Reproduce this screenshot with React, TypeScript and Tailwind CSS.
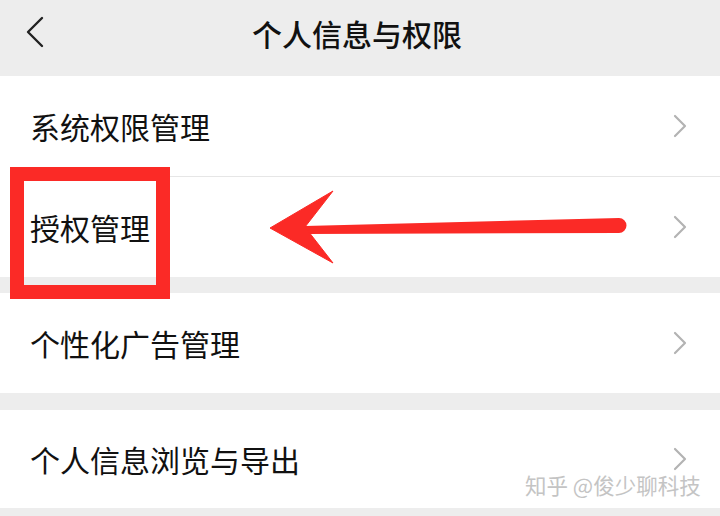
import React from "react";

const font = { fontFamily: '"Noto Sans CJK SC", "Noto Sans", sans-serif' };

function Chevron() {
  return (
    <svg width="16" height="24" viewBox="0 0 16 24" className="shrink-0">
      <path d="M3 2 L13 12 L3 22" fill="none" stroke="#b3b3b3" strokeWidth="2.2" strokeLinecap="round" strokeLinejoin="round" />
    </svg>
  );
}

function Row({ label, h = "h-[100px]" }: { label: string; h?: string }) {
  return (
    <div className={`flex items-center justify-between bg-white pl-[30px] pr-[32px] ${h}`}>
      <span className="text-[30px] leading-none text-[#111]">{label}</span>
      <Chevron />
    </div>
  );
}

export default function App() {
  return (
    <div className="relative w-[720px] h-[516px] overflow-hidden bg-[#ededed]" style={font}>
      {/* header */}
      <div className="relative flex h-[76px] items-start justify-center pt-[15px] pr-[6px]">
        <svg width="20" height="32" viewBox="0 0 20 32" className="absolute left-[25px] top-[16px]">
          <path d="M17 2 L3 16 L17 30" fill="none" stroke="#222" strokeWidth="2.4" strokeLinecap="round" strokeLinejoin="round" />
        </svg>
        <span className="text-[30px] font-medium leading-[36px] text-[#111]">个人信息与权限</span>
      </div>

      <div className="flex flex-col">
        <Row label="系统权限管理" />
        <div className="bg-white pl-[30px]">
          <div className="h-px bg-[#e6e6e6]" />
        </div>
        <Row label="授权管理" />
        <div className="h-[16px]" />
        <Row label="个性化广告管理" />
        <div className="h-[17px]" />
        <Row label="个人信息浏览与导出" h="h-[98px]" />
      </div>

      {/* annotations */}
      <div className="absolute left-[10px] top-[167px] h-[132px] w-[160px] border-[14px] border-[#fb2a26]" />
      <svg width="720" height="516" className="absolute left-0 top-0 pointer-events-none">
        <path d="M305 226 L619 218 A7.5 7.5 0 0 1 619 233 L305 234 Z" fill="#fb2a26" />
        <path d="M270 228 L333 191 L305 227 L333 263 Z" fill="#fb2a26" stroke="#fb2a26" strokeWidth="1" strokeLinejoin="round" />
      </svg>

      <div
        className="absolute left-[525px] top-[472px] text-[21.5px] leading-[26px] text-[#c4c4c4]"
        style={{ textShadow: "0 0 1px #fff, 1px 1px 0 #fff" }}
      >
        知乎 @俊少聊科技
      </div>
    </div>
  );
}
